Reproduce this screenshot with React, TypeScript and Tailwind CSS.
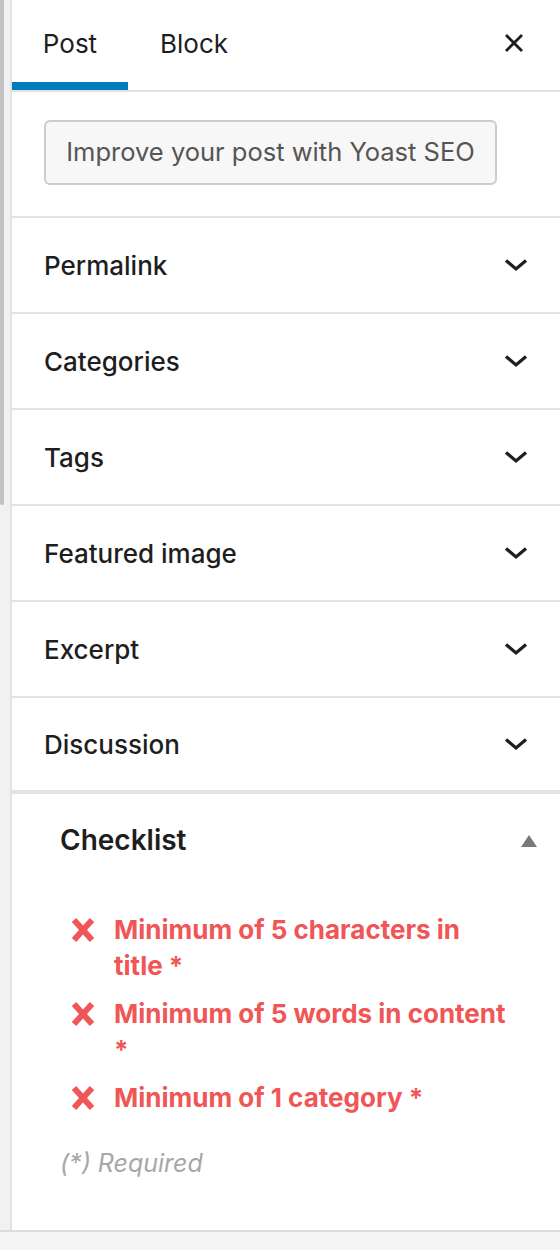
import { ReactNode } from 'react';

const rows = ['Permalink', 'Categories', 'Tags', 'Featured image', 'Excerpt', 'Discussion'];

function Chevron() {
  return (
    <svg width="24" height="14" viewBox="0 0 24 14" fill="none">
      <path d="M2 2.5 L12 11 L22 2.5" stroke="#1e1e1e" strokeWidth="3.2" />
    </svg>
  );
}

function CrossIcon() {
  return (
    <svg width="26" height="24" viewBox="0 0 26 24" className="shrink-0 mt-[6px]">
      <path d="M4 2 L22 22 M22 2 L4 22" stroke="#f05656" strokeWidth="6" />
    </svg>
  );
}

function CheckItem({ children }: { children: ReactNode }) {
  return (
    <li className="flex gap-[18px] pl-[10px]">
      <CrossIcon />
      <span className="text-[26px] leading-[36px] font-bold text-[#f05656]">{children}</span>
    </li>
  );
}

export default function App() {
  return (
    <div
      className="w-[560px] h-[1250px] bg-[#f4f4f4] flex flex-col overflow-hidden"
      style={{ fontFamily: 'Inter, "Noto Sans", sans-serif' }}
    >
      <div className="h-[1230px] flex shrink-0">
        {/* editor scrollbar */}
        <div className="w-[10px] bg-[#f1f1f1] flex">
          <div className="w-[4px] h-[505px] bg-[#c1c1c1] rounded-b-[2px]" />
        </div>
        <div className="flex-1 bg-white border-l-2 border-[#e2e2e2] flex flex-col">
          {/* Tabs */}
          <div className="h-[92px] border-b-2 border-[#e2e2e2] flex items-stretch">
            <div className="w-[116px] flex items-center justify-center text-[26px] text-[#1e1e1e] shadow-[inset_0_-8px_0_#007cba] pb-[4px]">
              Post
            </div>
            <div className="w-[132px] flex items-center justify-center text-[26px] text-[#1e1e1e] pb-[4px]">
              Block
            </div>
            <div className="flex-1" />
            <div className="w-[80px] flex items-center justify-center pb-[4px] pr-[12px]">
              <svg width="20" height="20" viewBox="0 0 20 20">
                <path d="M2 2 L18 18 M18 2 L2 18" stroke="#1e1e1e" strokeWidth="2.8" />
              </svg>
            </div>
          </div>

          {/* Yoast button */}
          <div className="pt-[28px] pb-[31px] pl-[32px] border-b-2 border-[#e2e2e2]">
            <div className="w-[453px] h-[65px] rounded-[6px] border-2 border-[#cccccc] bg-[#f7f7f7] flex items-center justify-center text-[25.5px] text-[#555555]">
              Improve your post with Yoast SEO
            </div>
          </div>

          {/* Panels */}
          {rows.map((r, i) => (
            <div
              key={r}
              className={`h-[96px] flex items-center justify-between pl-[32px] pr-[32px] ${
                i === rows.length - 1 ? 'border-b-4' : 'border-b-2'
              } border-[#e2e2e2]`}
            >
              <span className="text-[26px] font-medium text-[#1e1e1e]">{r}</span>
              <Chevron />
            </div>
          ))}

          {/* Checklist */}
          <div className="pl-[48px] pr-[22px] pt-[26px]">
            <div className="flex items-center justify-between h-[40px]">
              <span className="text-[28px] font-semibold text-[#1e1e1e]">Checklist</span>
              <svg width="18" height="14" viewBox="0 0 18 14" className="mt-[2px]">
                <path d="M9 1 L17 13 L1 13 Z" fill="#7a7a7a" />
              </svg>
            </div>
            <ul className="mt-[52px] flex flex-col gap-[12px]">
              <CheckItem>
                Minimum of 5 characters in
                <br />
                title *
              </CheckItem>
              <CheckItem>
                Minimum of 5 words in content
                <br />*
              </CheckItem>
              <CheckItem>Minimum of 1 category *</CheckItem>
            </ul>
            <div className="mt-[29px] text-[25px] italic text-[#a7a7a7]">(*) Required</div>
          </div>
        </div>
      </div>
      <div className="border-t-2 border-[#dcdcdc] flex-1 bg-[#f5f5f5]" />
    </div>
  );
}
